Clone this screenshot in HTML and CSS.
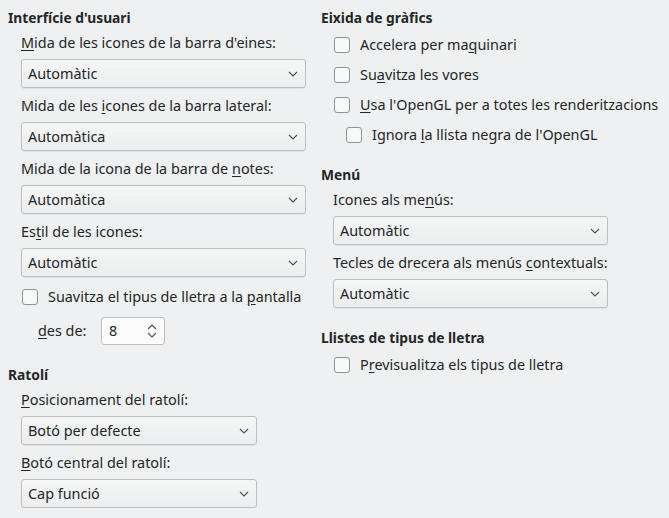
FILE: index.html
```html
<!DOCTYPE html>
<html lang="ca">
<head>
  <meta charset="UTF-8">
  <title>Visualització</title>
  <link rel="stylesheet" href="styles.css">
</head>
<body>
<div class="page">
  <div class="col col-left">
    <h2 class="heading">Interfície d'usuari</h2>
    <div class="group">
      <div class="label first"><u>M</u>ida de les icones de la barra d'eines:</div>
      <div class="combo wide"><span>Automàtic</span><svg class="chev" width="10" height="6" viewBox="0 0 10 6"><path d="M1 1 L5 5 L9 1" fill="none" stroke="#4d4f50" stroke-width="1.1"/></svg></div>

      <div class="label">Mida de les <u>i</u>cones de la barra lateral:</div>
      <div class="combo wide"><span>Automàtica</span><svg class="chev" width="10" height="6" viewBox="0 0 10 6"><path d="M1 1 L5 5 L9 1" fill="none" stroke="#4d4f50" stroke-width="1.1"/></svg></div>

      <div class="label">Mida de la icona de la barra de <u>n</u>otes:</div>
      <div class="combo wide"><span>Automàtica</span><svg class="chev" width="10" height="6" viewBox="0 0 10 6"><path d="M1 1 L5 5 L9 1" fill="none" stroke="#4d4f50" stroke-width="1.1"/></svg></div>

      <div class="label">Es<u>t</u>il de les icones:</div>
      <div class="combo wide"><span>Automàtic</span><svg class="chev" width="10" height="6" viewBox="0 0 10 6"><path d="M1 1 L5 5 L9 1" fill="none" stroke="#4d4f50" stroke-width="1.1"/></svg></div>

      <div class="check check-left"><span class="box"></span><span>Suavitza el tipus de lletra a la <u>p</u>antalla</span></div>
      <div class="spin-row">
        <span class="spin-label"><u>d</u>es de:</span>
        <div class="spin"><span>8</span>
          <svg class="arrows" width="10" height="14" viewBox="0 0 10 14"><path d="M1 5 L5 1 L9 5 M1 9 L5 13 L9 9" fill="none" stroke="#4d4f50" stroke-width="1.1"/></svg>
        </div>
      </div>
    </div>

    <h2 class="heading mouse">Ratolí</h2>
    <div class="group">
      <div class="label first"><u>P</u>osicionament del ratolí:</div>
      <div class="combo narrow"><span>Botó per defecte</span><svg class="chev" width="10" height="6" viewBox="0 0 10 6"><path d="M1 1 L5 5 L9 1" fill="none" stroke="#4d4f50" stroke-width="1.1"/></svg></div>

      <div class="label"><u>B</u>otó central del ratolí:</div>
      <div class="combo narrow"><span>Cap funció</span><svg class="chev" width="10" height="6" viewBox="0 0 10 6"><path d="M1 1 L5 5 L9 1" fill="none" stroke="#4d4f50" stroke-width="1.1"/></svg></div>
    </div>
  </div>

  <div class="col col-right">
    <h2 class="heading">Eixida de gràfics</h2>
    <div class="group checks">
      <div class="check"><span class="box"></span><span>Accelera per ma<u>q</u>uinari</span></div>
      <div class="check"><span class="box"></span><span>Su<u>a</u>vitza les vores</span></div>
      <div class="check"><span class="box"></span><span><u>U</u>sa l'OpenGL per a totes les renderitzacions</span></div>
      <div class="check sub"><span class="box"></span><span>Ignora <u>l</u>a llista negra de l'OpenGL</span></div>
    </div>

    <h2 class="heading menu">Menú</h2>
    <div class="group">
      <div class="label first">Icones als me<u>n</u>ús:</div>
      <div class="combo mid"><span>Automàtic</span><svg class="chev" width="10" height="6" viewBox="0 0 10 6"><path d="M1 1 L5 5 L9 1" fill="none" stroke="#4d4f50" stroke-width="1.1"/></svg></div>

      <div class="label">Tecles de drecera als menús <u>c</u>ontextuals:</div>
      <div class="combo mid"><span>Automàtic</span><svg class="chev" width="10" height="6" viewBox="0 0 10 6"><path d="M1 1 L5 5 L9 1" fill="none" stroke="#4d4f50" stroke-width="1.1"/></svg></div>
    </div>

    <h2 class="heading fonts">Llistes de tipus de lletra</h2>
    <div class="group checks">
      <div class="check"><span class="box"></span><span>P<u>r</u>evisualitza els tipus de lletra</span></div>
    </div>
  </div>
</div>
</body>
</html>
```

FILE: styles.css
```css
body {
  margin: 0;
  background: #eff0f1;
  color: #232627;
  font-family: "Noto Sans", "DejaVu Sans", sans-serif;
  font-size: 14.4px;
  line-height: 18px;
}
.page {
  display: flex;
  padding: 9px 8px 0 8px;
}
.col-left {
  width: 298px;
}
.col-right {
  margin-left: 15px;
  flex: 1;
}
.heading {
  margin: 0;
  font-size: 13.8px;
  font-weight: bold;
  line-height: 18px;
}
.heading.mouse {
  margin-top: 21px;
}
.heading.menu {
  margin-top: 16px;
}
.heading.fonts {
  margin-top: 21px;
}
.group {
  padding-left: 13px;
  display: flex;
  flex-direction: column;
  align-items: flex-start;
}
.col-right .group {
  padding-left: 12px;
}
.label {
  margin: 9px 0 7px;
}
.label.first {
  margin-top: 7px;
}
u {
  text-decoration: underline;
  text-underline-offset: 2px;
}
.combo {
  box-sizing: border-box;
  height: 29px;
  display: flex;
  align-items: center;
  justify-content: space-between;
  padding: 0 7px 0 6px;
  border: 1px solid #bcbebf;
  border-radius: 3px;
  background: linear-gradient(#f5f6f6, #ecedee);
  box-shadow: 0 1px 1px rgba(0,0,0,0.06);
}
.combo.wide {
  width: 285px;
}
.combo.mid {
  width: 275px;
}
.combo.narrow {
  width: 236px;
}
.check {
  display: flex;
  align-items: center;
  height: 24px;
}
.check-left {
  margin-top: 8px;
}
.checks .check {
  height: 30px;
}
.checks {
  margin-top: 3px;
}
.check.sub {
  padding-left: 12px;
}
.box {
  box-sizing: border-box;
  width: 16px;
  height: 16px;
  margin: 0 10px 0 1px;
  border: 1px solid #8f9192;
  border-radius: 3px;
  background: #f8f9f9;
}
.spin-row {
  display: flex;
  align-items: center;
  margin-top: 8px;
}
.spin-label {
  margin-left: 17px;
  width: 63px;
}
.spin {
  box-sizing: border-box;
  width: 64px;
  height: 28px;
  display: flex;
  align-items: center;
  justify-content: space-between;
  padding: 0 7px 0 7px;
  background: #fcfcfc;
  border: 1px solid #bcbebf;
  border-radius: 3px;
}
```
